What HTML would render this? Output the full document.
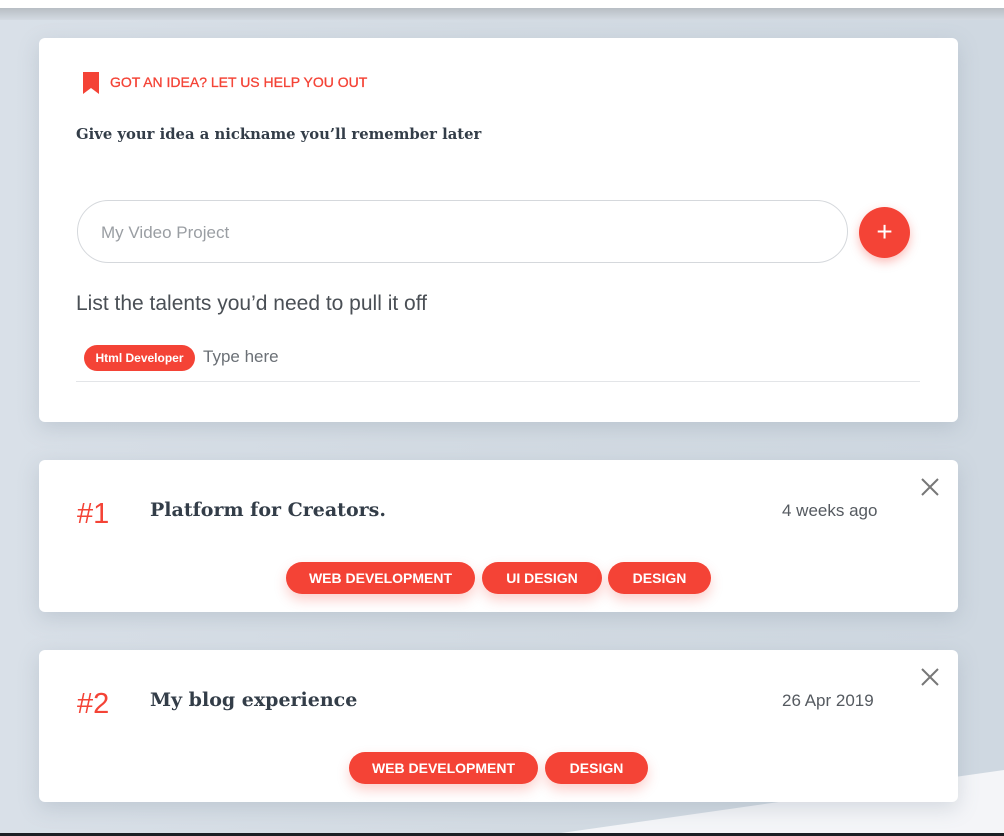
<!DOCTYPE html>
<html><head><style>
*{margin:0;padding:0;box-sizing:border-box}
body{width:1004px;height:836px;overflow:hidden;position:relative;font-family:"Liberation Sans",sans-serif;background:linear-gradient(90deg,#d9e0e8 0%,#d3dbe3 50%,#cfd8e1 100%)}
.top{position:absolute;left:0;top:0;width:1004px;height:8px;background:#fff}
.topsh{position:absolute;left:0;top:8px;width:1004px;height:12px;background:linear-gradient(#b8bec4,#d3dae2)}
.bot{position:absolute;left:0;top:0;width:1004px;height:836px}
.dark{position:absolute;left:0;top:833px;width:1004px;height:3px;background:#1b1f24}
.card{position:absolute;left:39px;width:919px;background:#fff;border-radius:6px;box-shadow:0 6px 20px rgba(120,135,150,.25)}
.red{color:#f44336}
.serif{font-family:"DejaVu Serif","Liberation Serif",serif;font-weight:bold;color:#333d48}
.pill{position:absolute;height:32px;border-radius:16px;background:#f44336;color:#fff;font-weight:bold;font-size:14px;line-height:32px;text-align:center;box-shadow:0 6px 12px rgba(244,67,54,.25)}
.x{position:absolute;width:20px;height:20px}
</style></head><body>
<div class="top"></div><div class="topsh"></div>
<svg class="bot" viewBox="0 0 1004 836"><polygon points="540,836 1004,770 1004,836" fill="#f4f5f8"/></svg>
<div class="dark"></div>

<div class="card" style="top:38px;height:384px">
  <svg style="position:absolute;left:43px;top:34px" width="18" height="22" viewBox="0 0 18 22"><path d="M1 0H17V22L9 16L1 22Z" fill="#f44336"/></svg>
  <div class="red" style="position:absolute;left:71px;top:36px;font-size:14px;-webkit-text-stroke:.3px #f44336">GOT AN IDEA? LET US HELP YOU OUT</div>
  <div class="serif" style="position:absolute;left:37px;top:88px;font-size:14.8px">Give your idea a nickname you’ll remember later</div>
  <div style="position:absolute;left:38px;top:162px;width:771px;height:63px;border:1px solid #d5d8dc;border-radius:32px"></div>
  <div style="position:absolute;left:62px;top:185px;font-size:17px;color:#9a9ea3">My Video Project</div>
  <div style="position:absolute;left:820px;top:169px;width:51px;height:51px;border-radius:50%;background:#f44336;box-shadow:0 4px 10px rgba(244,67,54,.35);color:#fff;font-size:28px;line-height:49px;text-align:center">+</div>
  <div style="position:absolute;left:37px;top:254px;font-size:21px;color:#4a4f55;font-weight:300">List the talents you’d need to pull it off</div>
  <div style="position:absolute;left:45px;top:307px;width:111px;height:26px;border-radius:13px;background:#f44336;color:#fff;font-size:12px;font-weight:bold;line-height:26px;text-align:center">Html Developer</div>
  <div style="position:absolute;left:164px;top:309px;font-size:17px;color:#6b7076">Type here</div>
  <div style="position:absolute;left:37px;top:343px;width:844px;height:1px;background:#e3e5e8"></div>
</div>

<div class="card" style="top:460px;height:152px">
  <div class="red" style="position:absolute;left:38px;top:38px;font-size:29px;font-weight:300">#1</div>
  <div class="serif" style="position:absolute;left:111px;top:39px;font-size:19px">Platform for Creators.</div>
  <div style="position:absolute;left:743px;top:41px;font-size:17px;color:#555a60">4 weeks ago</div>
  <svg class="x" style="left:881px;top:17px" viewBox="0 0 20 20"><path d="M2 2L18 18M18 2L2 18" stroke="#777" stroke-width="2"/></svg>
  <div class="pill" style="left:247px;top:102px;width:189px">WEB DEVELOPMENT</div>
  <div class="pill" style="left:443px;top:102px;width:120px">UI DESIGN</div>
  <div class="pill" style="left:569px;top:102px;width:103px">DESIGN</div>
</div>

<div class="card" style="top:650px;height:152px">
  <div class="red" style="position:absolute;left:38px;top:38px;font-size:29px;font-weight:300">#2</div>
  <div class="serif" style="position:absolute;left:111px;top:39px;font-size:19px">My blog experience</div>
  <div style="position:absolute;left:743px;top:41px;font-size:17px;color:#555a60">26 Apr 2019</div>
  <svg class="x" style="left:881px;top:17px" viewBox="0 0 20 20"><path d="M2 2L18 18M18 2L2 18" stroke="#777" stroke-width="2"/></svg>
  <div class="pill" style="left:310px;top:102px;width:189px">WEB DEVELOPMENT</div>
  <div class="pill" style="left:506px;top:102px;width:103px">DESIGN</div>
</div>
</body></html>
